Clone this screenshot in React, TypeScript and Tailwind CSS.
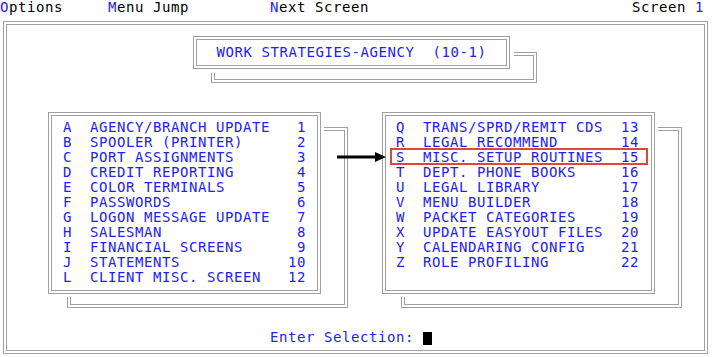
import React from "react";

const leftItems: [string, string, string][] = [
    ["A", "AGENCY/BRANCH UPDATE", "1"],
    ["B", "SPOOLER (PRINTER)", "2"],
    ["C", "PORT ASSIGNMENTS", "3"],
    ["D", "CREDIT REPORTING", "4"],
    ["E", "COLOR TERMINALS", "5"],
    ["F", "PASSWORDS", "6"],
    ["G", "LOGON MESSAGE UPDATE", "7"],
    ["H", "SALESMAN", "8"],
    ["I", "FINANCIAL SCREENS", "9"],
    ["J", "STATEMENTS", "10"],
    ["L", "CLIENT MISC. SCREEN", "12"],
];

const rightItems: [string, string, string][] = [
    ["Q", "TRANS/SPRD/REMIT CDS", "13"],
    ["R", "LEGAL RECOMMEND", "14"],
    ["S", "MISC. SETUP ROUTINES", "15"],
    ["T", "DEPT. PHONE BOOKS", "16"],
    ["U", "LEGAL LIBRARY", "17"],
    ["V", "MENU BUILDER", "18"],
    ["W", "PACKET CATEGORIES", "19"],
    ["X", "UPDATE EASYOUT FILES", "20"],
    ["Y", "CALENDARING CONFIG", "21"],
    ["Z", "ROLE PROFILING", "22"],
];

const line = (k: string, label: string, n: string) =>
    `${k}  ${label.padEnd(22)}${n.padStart(2)}`;

const MenuBox = ({ items, pad }: { items: [string, string, string][]; pad: string }) => (
    <div className="relative">
        {/* shadow box */}
        <div className="absolute left-[19px] top-[15px] w-[281px] h-[181px] border-[4px] border-double border-[#a0a0a0]" />
        <div className={`relative z-10 w-[273px] h-[182px] bg-white border-[4px] border-double border-[#a0a0a0] ring-[3px] ring-white pt-[4px] ${pad}`}>
            {items.map(([k, label, n]) => (
                <div key={k} className="h-[15px] leading-[15px] whitespace-pre">
                    {line(k, label, n)}
                </div>
            ))}
        </div>
    </div>
);

export default function App() {
    return (
        <div
            className="relative w-[713px] h-[357px] bg-white text-[14px] tracking-[0.57px] leading-[15px] text-[#2222ee] overflow-hidden"
            style={{ fontFamily: '"DejaVu Sans Mono", "Liberation Mono", monospace' }}
        >
            {/* top menu bar */}
            <div className="flex h-[15px] whitespace-pre text-black">
                <span className="w-[108px]">
                    <span className="text-[#2222ee]">O</span>ptions
                </span>
                <span className="w-[162px]">
                    <span className="text-[#2222ee]">M</span>enu Jump
                </span>
                <span>
                    <span className="text-[#2222ee]">N</span>ext Screen
                </span>
                <span className="ml-auto pr-[9px]">
                    Screen <span className="text-[#2222ee]">1</span>
                </span>
            </div>

            {/* main frame */}
            <div className="mt-[6px] ml-[3px] w-[705px] h-[333px] border-[4px] border-double border-[#a0a0a0] flex flex-col">
                {/* title */}
                <div className="mt-[11px] ml-[186px] relative w-[317px]">
                    <div className="absolute left-[18px] top-[16px] w-[326px] h-[31px] border-[4px] border-double border-[#a0a0a0]" />
                    <div className="relative z-10 w-[317px] h-[33px] bg-white border-[4px] border-double border-[#a0a0a0] ring-[4px] ring-white flex items-center justify-center whitespace-pre">
                        WORK STRATEGIES-AGENCY  (10-1)
                    </div>
                </div>

                {/* menus */}
                <div className="mt-[43px] ml-[41px] flex gap-[61px]">
                    <MenuBox items={leftItems} pad="pl-[11px]" />
                    <div className="relative">
                        <MenuBox items={rightItems} pad="pl-[10px]" />
                        <div className="absolute z-20 left-[8px] top-[36px] w-[258px] h-[17px] border-2 border-[#e0453c]" />
                    </div>
                </div>

                {/* prompt */}
                <div className="mt-[36px] ml-[263px] flex items-center whitespace-pre h-[15px]">
                    <span>Enter Selection: </span>
                    <span className="inline-block w-[9px] h-[13px] bg-black mt-[2px]" />
                </div>
            </div>

            {/* pointer arrow */}
            <svg className="absolute left-[337px] top-[151px] z-30" width="50" height="12" viewBox="0 0 50 12">
                <rect x="0" y="4.5" width="40" height="3" fill="#000" />
                <polygon points="38,1 49,6 38,11" fill="#000" />
            </svg>
        </div>
    );
}
